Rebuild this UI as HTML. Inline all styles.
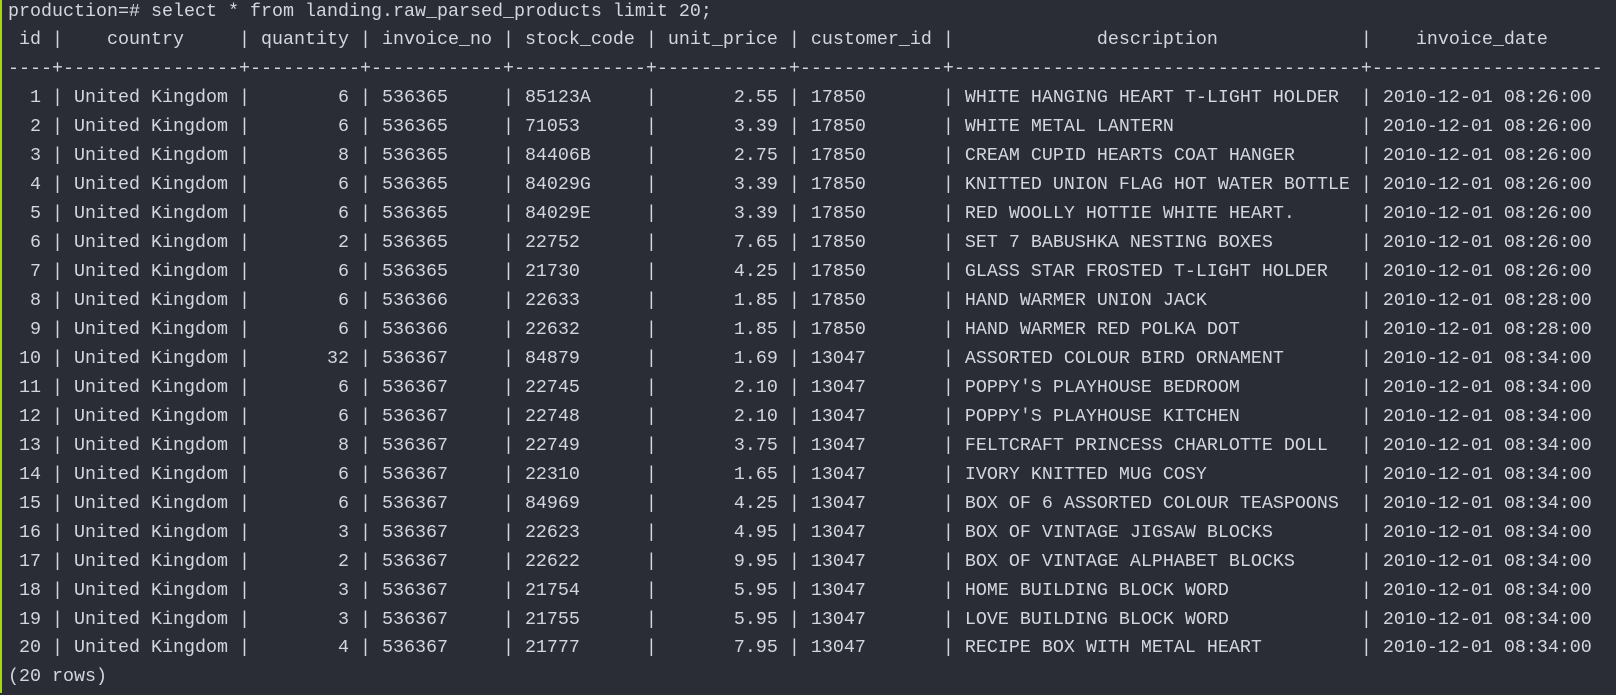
<!DOCTYPE html>
<html><head><meta charset="utf-8"><style>
html,body{margin:0;padding:0;background:#2a2d35;width:1616px;height:695px;overflow:hidden}
body{border-left:2px solid #a6d61a;box-sizing:border-box}
pre{margin:-2.5px 0 0 6px;font-family:"Liberation Mono",monospace;font-size:18.33px;line-height:28.96px;color:#d2d6dd;white-space:pre}
</style></head><body><pre>production=# select * from landing.raw_parsed_products limit 20;
 id |    country     | quantity | invoice_no | stock_code | unit_price | customer_id |             description             |    invoice_date
----+----------------+----------+------------+------------+------------+-------------+-------------------------------------+---------------------
  1 | United Kingdom |        6 | 536365     | 85123A     |       2.55 | 17850       | WHITE HANGING HEART T-LIGHT HOLDER  | 2010-12-01 08:26:00
  2 | United Kingdom |        6 | 536365     | 71053      |       3.39 | 17850       | WHITE METAL LANTERN                 | 2010-12-01 08:26:00
  3 | United Kingdom |        8 | 536365     | 84406B     |       2.75 | 17850       | CREAM CUPID HEARTS COAT HANGER      | 2010-12-01 08:26:00
  4 | United Kingdom |        6 | 536365     | 84029G     |       3.39 | 17850       | KNITTED UNION FLAG HOT WATER BOTTLE | 2010-12-01 08:26:00
  5 | United Kingdom |        6 | 536365     | 84029E     |       3.39 | 17850       | RED WOOLLY HOTTIE WHITE HEART.      | 2010-12-01 08:26:00
  6 | United Kingdom |        2 | 536365     | 22752      |       7.65 | 17850       | SET 7 BABUSHKA NESTING BOXES        | 2010-12-01 08:26:00
  7 | United Kingdom |        6 | 536365     | 21730      |       4.25 | 17850       | GLASS STAR FROSTED T-LIGHT HOLDER   | 2010-12-01 08:26:00
  8 | United Kingdom |        6 | 536366     | 22633      |       1.85 | 17850       | HAND WARMER UNION JACK              | 2010-12-01 08:28:00
  9 | United Kingdom |        6 | 536366     | 22632      |       1.85 | 17850       | HAND WARMER RED POLKA DOT           | 2010-12-01 08:28:00
 10 | United Kingdom |       32 | 536367     | 84879      |       1.69 | 13047       | ASSORTED COLOUR BIRD ORNAMENT       | 2010-12-01 08:34:00
 11 | United Kingdom |        6 | 536367     | 22745      |       2.10 | 13047       | POPPY'S PLAYHOUSE BEDROOM           | 2010-12-01 08:34:00
 12 | United Kingdom |        6 | 536367     | 22748      |       2.10 | 13047       | POPPY'S PLAYHOUSE KITCHEN           | 2010-12-01 08:34:00
 13 | United Kingdom |        8 | 536367     | 22749      |       3.75 | 13047       | FELTCRAFT PRINCESS CHARLOTTE DOLL   | 2010-12-01 08:34:00
 14 | United Kingdom |        6 | 536367     | 22310      |       1.65 | 13047       | IVORY KNITTED MUG COSY              | 2010-12-01 08:34:00
 15 | United Kingdom |        6 | 536367     | 84969      |       4.25 | 13047       | BOX OF 6 ASSORTED COLOUR TEASPOONS  | 2010-12-01 08:34:00
 16 | United Kingdom |        3 | 536367     | 22623      |       4.95 | 13047       | BOX OF VINTAGE JIGSAW BLOCKS        | 2010-12-01 08:34:00
 17 | United Kingdom |        2 | 536367     | 22622      |       9.95 | 13047       | BOX OF VINTAGE ALPHABET BLOCKS      | 2010-12-01 08:34:00
 18 | United Kingdom |        3 | 536367     | 21754      |       5.95 | 13047       | HOME BUILDING BLOCK WORD            | 2010-12-01 08:34:00
 19 | United Kingdom |        3 | 536367     | 21755      |       5.95 | 13047       | LOVE BUILDING BLOCK WORD            | 2010-12-01 08:34:00
 20 | United Kingdom |        4 | 536367     | 21777      |       7.95 | 13047       | RECIPE BOX WITH METAL HEART         | 2010-12-01 08:34:00
(20 rows)
</pre></body></html>
